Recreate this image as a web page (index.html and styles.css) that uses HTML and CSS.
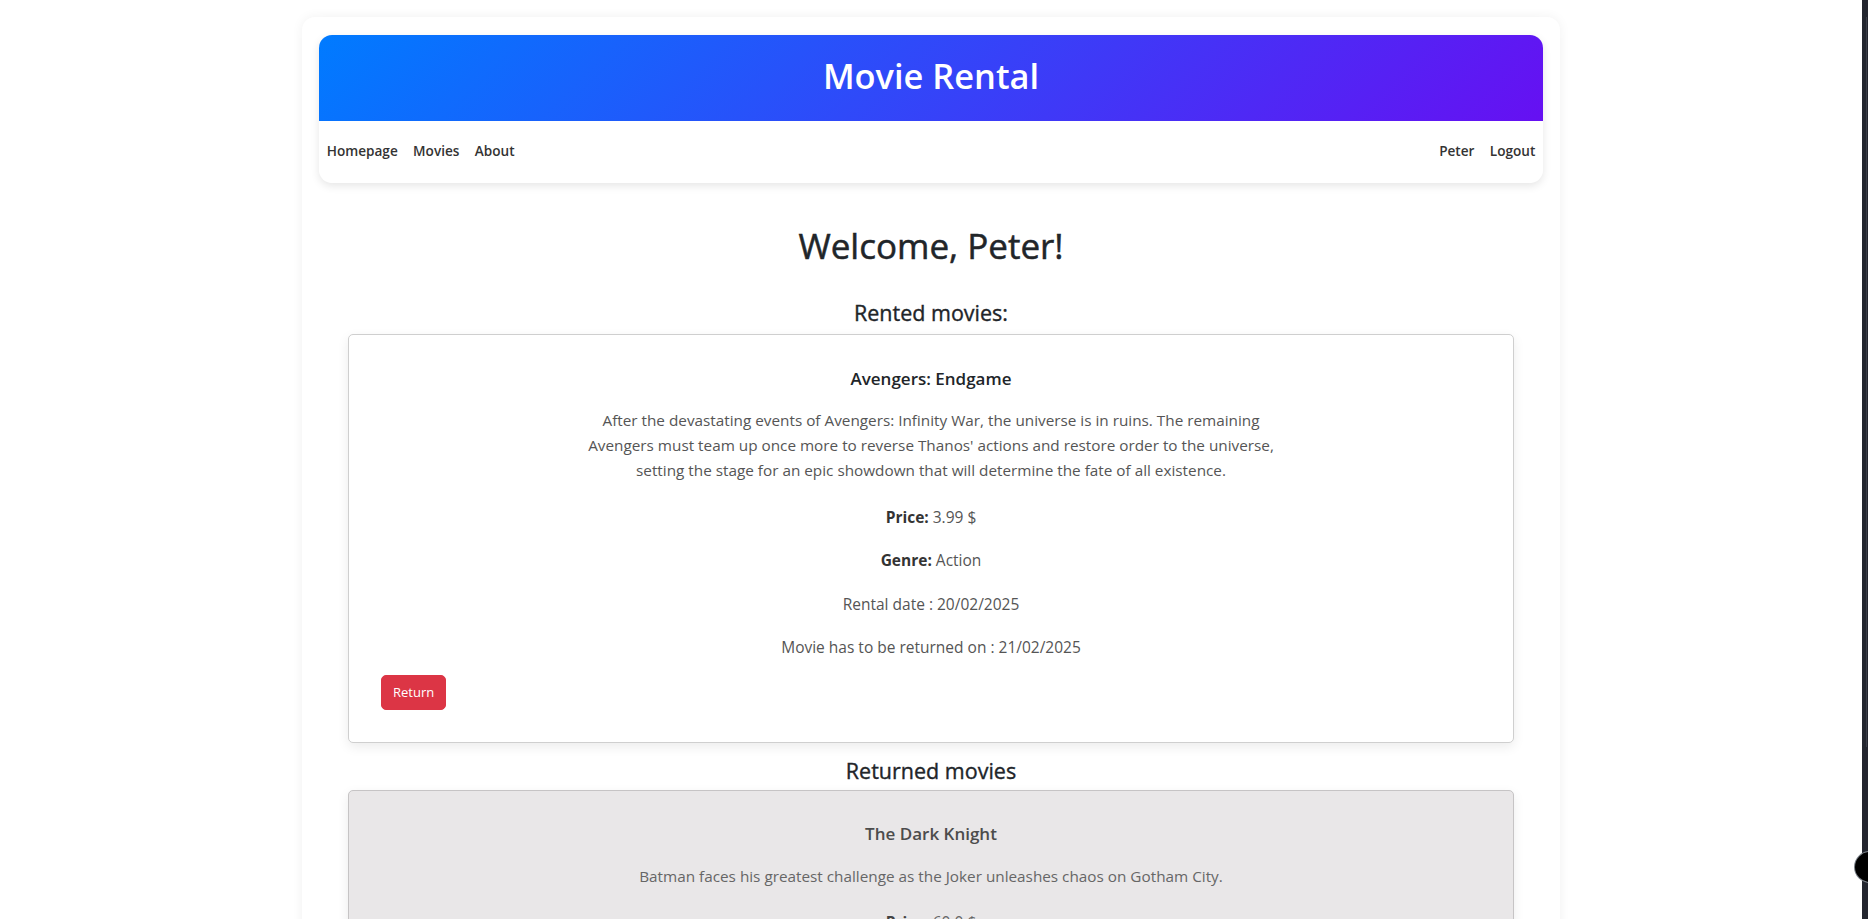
FILE: index.html
```html
<!DOCTYPE html>
<html lang="en">
<head>
<meta charset="utf-8">
<title>Movie Rental</title>
<link rel="stylesheet" href="styles.css">
</head>
<body>
<div class="layout">
  <div class="page">
    <div class="shell">
      <header class="site-header">
        <div class="banner"><h1 class="brand">Movie Rental</h1></div>
        <nav class="navbar">
          <ul class="nav-list">
            <li><a class="nav-link" href="#">Homepage</a></li>
            <li><a class="nav-link" href="#">Movies</a></li>
            <li><a class="nav-link" href="#">About</a></li>
          </ul>
          <ul class="nav-list">
            <li><a class="nav-link" href="#">Peter</a></li>
            <li><a class="nav-link" href="#">Logout</a></li>
          </ul>
        </nav>
      </header>

      <main class="content">
        <h1 class="welcome">Welcome, Peter!</h1>

        <h2 class="section-title">Rented movies:</h2>
        <div class="movie-card">
          <h3 class="movie-title">Avengers: Endgame</h3>
          <p class="movie-desc">After the devastating events of Avengers: Infinity War, the universe is in ruins. The remaining Avengers must team up once more to reverse Thanos' actions and restore order to the universe, setting the stage for an epic showdown that will determine the fate of all existence.</p>
          <p class="movie-meta"><strong>Price:</strong> 3.99 $</p>
          <p class="movie-meta"><strong>Genre:</strong> Action</p>
          <p class="movie-meta">Rental date : 20/02/2025</p>
          <p class="movie-meta last">Movie has to be returned on : 21/02/2025</p>
          <button class="btn-return" type="button">Return</button>
        </div>

        <h2 class="section-title section-title-returned">Returned movies</h2>
        <div class="movie-card returned">
          <h3 class="movie-title">The Dark Knight</h3>
          <p class="movie-desc">Batman faces his greatest challenge as the Joker unleashes chaos on Gotham City.</p>
          <p class="movie-meta"><strong>Price:</strong> 60.0 $</p>
          <p class="movie-meta"><strong>Genre:</strong> Action</p>
          <p class="movie-meta">Rental date : 18/02/2025</p>
          <p class="movie-meta last">Returned on : 19/02/2025</p>
        </div>
      </main>
    </div>
  </div>
  <div class="side-strip"><div class="side-line"></div></div>
  <div class="corner-orb"></div>
</div>
</body>
</html>
```

FILE: styles.css
```css
html {
  overflow: hidden;
}

body {
  margin: 0;
  background: #ffffff;
  font-family: "Open Sans", "Noto Sans", "DejaVu Sans", sans-serif;
  color: #212529;
}

.layout {
  display: flex;
  min-height: 919px;
  position: relative;
}

.page {
  flex: 1;
  padding-top: 17px;
}

.shell {
  width: 1258px;
  margin: 0 auto;
  box-sizing: border-box;
  padding: 18px 17px 40px;
  background: #ffffff;
  border-radius: 13px;
  box-shadow: 0 0 12px rgba(0, 0, 0, 0.06);
}

.site-header {
  border-radius: 13px;
  box-shadow: 0 3px 8px rgba(0, 0, 0, 0.1);
}

.banner {
  height: 86px;
  display: flex;
  align-items: center;
  justify-content: center;
  background: linear-gradient(135deg, #007bff, #6610f2);
  border-radius: 13px 13px 0 0;
}

.brand {
  margin: 0 0 5px;
  color: #ffffff;
  font-size: 34.4px;
  font-weight: 600;
  line-height: 1.2;
}

.navbar {
  height: 62px;
  box-sizing: border-box;
  padding-bottom: 3px;
  display: flex;
  align-items: center;
  justify-content: space-between;
  background: #ffffff;
  border-radius: 0 0 15px 15px;
}

.nav-list {
  list-style: none;
  margin: 0;
  padding: 0;
  display: flex;
}

.nav-link {
  display: block;
  padding: 0 7.7px;
  font-size: 13.6px;
  font-weight: 600;
  color: #333333;
  text-decoration: none;
  line-height: 22px;
}

.content {
  padding-top: 39px;
  text-align: center;
}

.welcome {
  margin: 0 0 28px;
  font-size: 35px;
  font-weight: 400;
  -webkit-text-stroke: 0.5px currentColor;
  line-height: 48px;
  color: #212529;
}

.section-title {
  margin: 0 0 7px;
  font-size: 21.5px;
  font-weight: 400;
  -webkit-text-stroke: 0.35px currentColor;
  line-height: 29px;
  color: #212529;
}

.section-title-returned {
  margin-bottom: 4.5px;
}

.movie-card {
  width: 1166px;
  box-sizing: border-box;
  margin: 0 auto 13.5px;
  padding: 31.5px 32px 32px;
  background: #ffffff;
  border: 1px solid #cfcfcf;
  border-radius: 5px;
  box-shadow: 0 4px 12px rgba(0, 0, 0, 0.08);
  text-align: center;
}

.movie-card.returned {
  background: #e9e7e8;
  border-color: #c6c4c5;
}

.movie-title {
  margin: 0 0 17.5px;
  font-size: 17px;
  font-weight: 600;
  line-height: 24px;
  color: #212529;
}

.movie-desc {
  max-width: 700px;
  margin: 0 auto 20.5px;
  font-size: 15.3px;
  line-height: 25px;
  color: #555555;
}

.movie-meta {
  margin: 0 0 16px;
  font-size: 15.5px;
  line-height: 27.5px;
  color: #555555;
}

.movie-meta strong {
  color: #333333;
  font-weight: 700;
}

.movie-meta.last {
  margin-bottom: 13px;
}

.returned .movie-title {
  color: #4c4c4c;
}

.returned .movie-desc,
.returned .movie-meta {
  color: #666666;
}

.returned .movie-meta strong {
  color: #444444;
}

.btn-return {
  display: block;
  padding: 6px 11px;
  border: 1px solid #dc3545;
  border-radius: 5px;
  background: #dc3545;
  color: #ffffff;
  font-family: inherit;
  font-size: 13px;
  line-height: 21px;
}

.side-strip {
  width: 6px;
  background: #23262f;
  padding-top: 17px;
  box-sizing: border-box;
}

.side-line {
  margin-left: 4px;
  width: 1px;
  height: 730px;
  background: #3b3e48;
}

.corner-orb {
  position: absolute;
  left: 1855px;
  top: 852px;
  width: 30px;
  height: 30px;
  border-radius: 50%;
  background: #000000;
  box-shadow: 0 0 0 1px #7a8088;
}
```
